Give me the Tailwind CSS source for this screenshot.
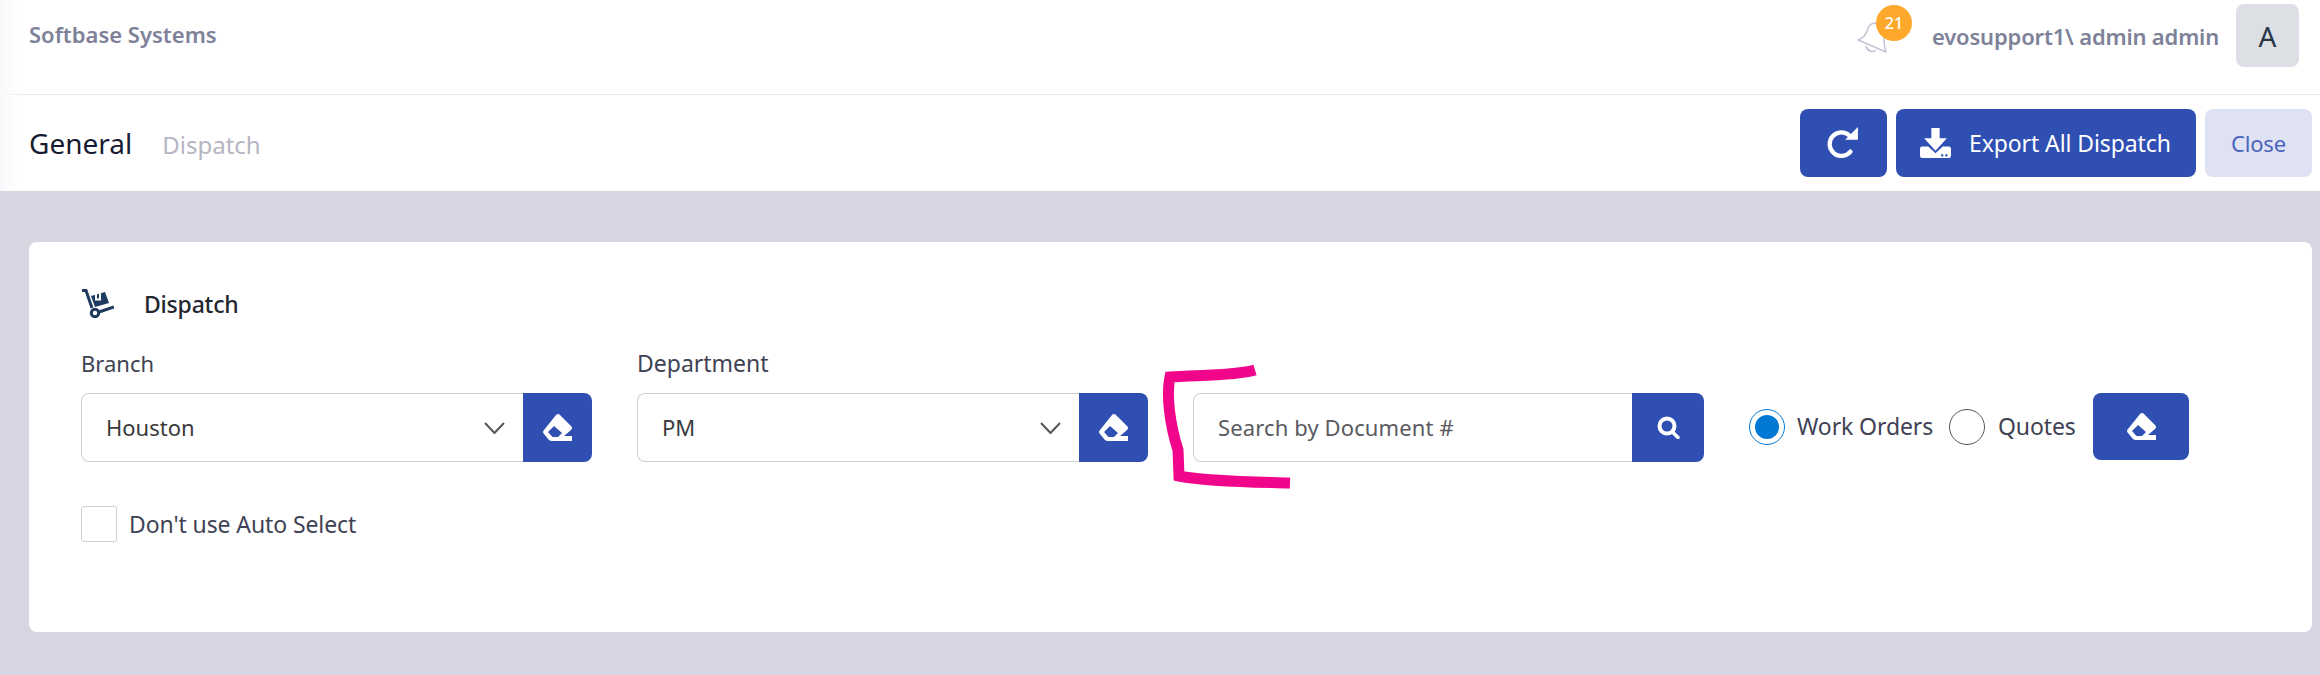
<!DOCTYPE html>
<html>
<head>
<meta charset="utf-8">
<script src="https://cdn.jsdelivr.net/npm/@tailwindcss/browser@4"></script>
</head>
<body class="m-0">
<div class="relative h-[675px] w-[2320px] overflow-hidden bg-[#d6d6e2] font-['Noto_Sans',sans-serif]">
  <header class="box-content flex h-[94px] items-start justify-between border-b border-[#ebebf5] bg-white pl-[29px] pr-[21px]">
    <div class="mt-[19px] text-[22px] leading-[30px] font-semibold text-[#7e8299]">Softbase Systems</div>
    <div class="flex items-start">
      <div class="relative mt-[22px] h-[32px] w-[32px]">
        <svg viewBox="0 0 32 32" class="h-[32px] w-[32px]" fill="none" stroke="#c3c5d4" stroke-width="1.5" stroke-linejoin="round"><path d="M2 18C7 16 10 13 11 9C12 4 15 1 20 1L28 8C28 14 27 21 30 30Z"/><path d="M10 24C11 29 17 31 20 28"/></svg>
        <div class="absolute left-[20px] top-[-17px] flex h-[36px] w-[36px] items-center justify-center rounded-full bg-[#ffa92c] text-[16px] font-medium text-white">21</div>
      </div>
      <div class="ml-[44px] mt-[20px] text-[22px] leading-[32px] font-semibold tracking-[-0.18px] text-[#7e8299]">evosupport1\ admin admin</div>
      <div class="ml-[17px] mt-[4px] flex h-[63px] w-[63px] items-center justify-center rounded-lg bg-[#dcdfe4] text-[28px] text-[#2a3547]">A</div>
    </div>
  </header>
  <nav class="flex h-[96px] items-center justify-between bg-white pl-[29px] pr-[8px]">
    <div class="flex items-baseline">
      <span class="text-[28px] text-[#181c32]">General</span>
      <span class="ml-[30px] text-[24px] text-[#b5b5c3]">Dispatch</span>
    </div>
    <div class="flex items-center gap-[9px]">
      <button class="flex h-[68px] w-[87px] items-center justify-center rounded-lg bg-[#2f4fb3]">
        <svg viewBox="0 0 30 30" class="mr-[2px] h-[32px] w-[32px]" fill="none"><path d="M21 8A11 11 0 1 0 22 23" stroke="#fff" stroke-width="4" stroke-linecap="round"/><path d="M29 0V12H17Z" fill="#fff"/></svg>
      </button>
      <button class="flex h-[68px] w-[300px] items-center rounded-lg bg-[#2f4fb3] pl-[24px] text-[23px] text-white">
        <svg viewBox="0 0 30 30" class="h-[31px] w-[31px]" fill="#fff"><path d="M11 0H19V10H26L15 22L4 10H11Z"/><path fill-rule="evenodd" d="M0 20Q0 18 2 18H8L15 24.500L22 18H28Q30 18 30 20V27Q30 29 28 29H2Q0 29 0 27ZM20.500 25.500H22.500V27.500H20.500ZM24.500 25.500H26.500V27.500H24.500Z"/></svg>
        <span class="ml-[18px] tracking-[-0.1px]">Export All Dispatch</span>
      </button>
      <button class="flex h-[68px] w-[107px] items-center justify-center rounded-lg bg-[#dee2f2] text-[22px] tracking-[-0.2px] text-[#4a64bd]">Close</button>
    </div>
  </nav>
  <main class="ml-[29px] mt-[51px] h-[390px] w-[2283px] rounded-lg bg-white pl-[52px] pt-[46px]">
    <div class="flex h-[30px] items-center">
      <svg viewBox="0 0 33 30" class="h-[30px] w-[33px]" fill="none" stroke="#1e3a5f" stroke-width="3"><path d="M1 2.500H5L11 20"/><circle cx="14" cy="25" r="3.700"/><path d="M18 24L33 19"/><path d="M10 8L24 4L28 15L14 19Z" fill="#1e3a5f" stroke="none"/><path d="M15 5V11.500H19V4" stroke="#fff" stroke-width="2"/></svg>
      <span class="ml-[30px] mt-[3px] text-[23px] font-medium tracking-[-0.2px] text-[#23262f]">Dispatch</span>
    </div>
    <div class="mt-[30px] flex items-start">
      <div class="w-[511px]">
        <label class="block text-[22px] leading-[30px] text-[#3f4254]">Branch</label>
        <div class="mt-[15px] flex h-[69px]">
          <div class="flex flex-1 items-center justify-between rounded-l-lg border border-r-0 border-[#d0d0d0] pl-[24px] pr-[18px] text-[22px] text-[#3a3a3a]">
            <span>Houston</span>
            <svg viewBox="0 0 21 12" class="h-[12px] w-[21px]" fill="none" stroke="#555" stroke-width="2"><path d="M1 1L10.500 11L20 1"/></svg>
          </div>
          <button class="flex w-[69px] items-center justify-center rounded-r-lg bg-[#2f4fb3]">
            <svg viewBox="0 0 29 27" class="h-[27px] w-[31px]" fill="#fff"><path fill-rule="evenodd" d="M13 1Q15 -1 17 1L28 12Q30 14 28 16L21 22H29V27H9Q7 27 6 26L1 20Q-1 18 1 16ZM11 12L5 18L9.500 23H15L19 19Z"/></svg>
          </button>
        </div>
      </div>
      <div class="ml-[45px] w-[511px]">
        <label class="block text-[23px] leading-[30px] text-[#3f4254]">Department</label>
        <div class="mt-[15px] flex h-[69px]">
          <div class="flex flex-1 items-center justify-between rounded-l-lg border border-r-0 border-[#d0d0d0] pl-[24px] pr-[18px] text-[22px] text-[#3a3a3a]">
            <span>PM</span>
            <svg viewBox="0 0 21 12" class="h-[12px] w-[21px]" fill="none" stroke="#555" stroke-width="2"><path d="M1 1L10.500 11L20 1"/></svg>
          </div>
          <button class="flex w-[69px] items-center justify-center rounded-r-lg bg-[#2f4fb3]">
            <svg viewBox="0 0 29 27" class="h-[27px] w-[31px]" fill="#fff"><path fill-rule="evenodd" d="M13 1Q15 -1 17 1L28 12Q30 14 28 16L21 22H29V27H9Q7 27 6 26L1 20Q-1 18 1 16ZM11 12L5 18L9.500 23H15L19 19Z"/></svg>
          </button>
        </div>
      </div>
      <div class="ml-[45px] mt-[45px] flex h-[69px] w-[511px]">
        <div class="flex flex-1 items-center rounded-l-lg border border-r-0 border-[#d0d0d0] pl-[24px] text-[22px] tracking-[0.12px] text-[#5a5a5f]">Search by Document #</div>
        <button class="flex w-[72px] items-center justify-center rounded-r-lg bg-[#2f4fb3]">
          <svg viewBox="0 0 23 23" class="h-[23px] w-[23px]" fill="none" stroke="#fff"><circle cx="10" cy="10" r="7.500" stroke-width="4"/><path d="M15.500 16L21 21.500" stroke-width="3.500" stroke-linecap="round"/></svg>
        </button>
      </div>
      <div class="ml-[45px] mt-[45px] flex h-[67px] items-center text-[23px] tracking-[-0.1px] text-[#3f4254]">
        <span class="flex h-[36px] w-[36px] items-center justify-center rounded-full border border-[#0078d4]"><span class="h-[24px] w-[24px] rounded-full bg-[#0078d4]"></span></span>
        <span class="ml-[12px] w-[152px] whitespace-nowrap">Work Orders</span>
        <span class="h-[36px] w-[36px] rounded-full border border-[#555]"></span>
        <span class="ml-[13px] w-[95px] whitespace-nowrap">Quotes</span>
        <button class="flex h-[67px] w-[96px] items-center justify-center rounded-lg bg-[#2f4fb3]">
          <svg viewBox="0 0 29 27" class="h-[27px] w-[31px]" fill="#fff"><path fill-rule="evenodd" d="M13 1Q15 -1 17 1L28 12Q30 14 28 16L21 22H29V27H9Q7 27 6 26L1 20Q-1 18 1 16ZM11 12L5 18L9.500 23H15L19 19Z"/></svg>
        </button>
      </div>
    </div>
    <label class="mt-[44px] flex items-center text-[23px] tracking-[-0.1px] text-[#3f4254]">
      <span class="h-[36px] w-[36px] rounded-[3px] border border-[#d0d0d0]"></span>
      <span class="ml-[12px]">Don't use Auto Select</span>
    </label>
  </main>
  <div class="pointer-events-none absolute left-0 top-0 h-[191px] w-[20px] bg-gradient-to-r from-[#f9f9fb] to-white/0"></div>
  <svg class="pointer-events-none absolute left-0 top-0 h-[675px] w-[2320px]" viewBox="0 0 2320 675" fill="none"><path d="M1255 370C1235 376 1195 375 1170 377C1166 395 1170 425 1178 450L1179 476C1210 482 1260 482 1290 483" stroke="#f0058b" stroke-width="11"/></svg>
</div>
</body>
</html>
